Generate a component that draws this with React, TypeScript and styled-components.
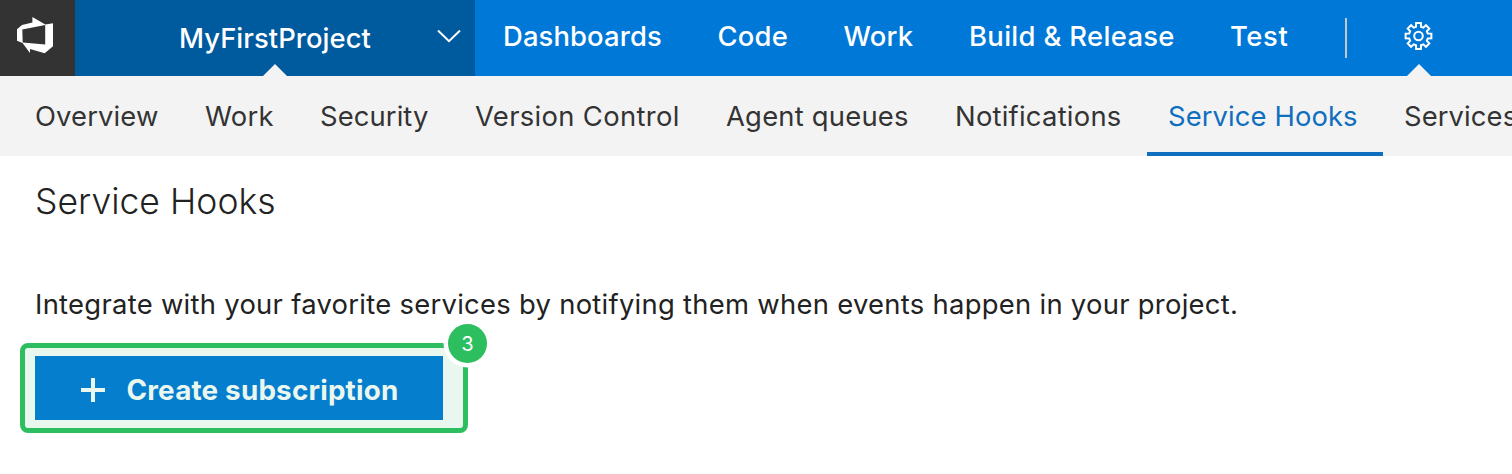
import React from "react";
import styled, { createGlobalStyle } from "styled-components";

const Global = createGlobalStyle`
  * { box-sizing: border-box; }
  html, body { margin: 0; padding: 0; background: #fff; overflow: hidden; }
  body { font-family: Inter, "Liberation Sans", sans-serif; color: #222; }
`;

const Page = styled.div`
  width: 1512px;
  height: 474px;
  overflow: hidden;
  background: #fff;
`;

const TopBar = styled.header`
  display: flex;
  height: 76px;
  background: #0078d7;
  color: #fff;
`;

const LogoCell = styled.div`
  width: 75px;
  flex: none;
  background: #333;
  svg { display: block; }
`;

const ProjectPicker = styled.div`
  position: relative;
  display: flex;
  align-items: center;
  justify-content: space-between;
  width: 400px;
  flex: none;
  padding: 0 13px 0 104px;
  background: #005a9e;
  svg { margin-bottom: 2px; }
`;

const Label = styled.span<{ $spacing: number }>`
  font-size: 27.4px;
  line-height: 40px;
  letter-spacing: ${(p) => p.$spacing}px;
  white-space: nowrap;
`;

const ProjectName = styled(Label)`
  font-weight: 500;
`;

const Hubs = styled.nav`
  display: flex;
  align-items: center;
  padding: 0 0 4px 28px;
`;

const Hub = styled.a<{ $width: number }>`
  flex: none;
  width: ${(p) => p.$width}px;
  font-weight: 500;
`;

const Divider = styled.i`
  flex: none;
  width: 2px;
  height: 40px;
  margin-top: 18px;
  background: #c8c8c8;
`;

const Settings = styled.div`
  position: relative;
  flex: none;
  width: 144px;
  svg { display: block; }
`;

const Notch = styled.span<{ $left: number }>`
  position: absolute;
  left: ${(p) => p.$left}px;
  bottom: 0;
  width: 24px;
  height: 12px;
  background: #f3f3f3;
  clip-path: polygon(50% 0, 100% 100%, 0 100%);
`;

const Tabs = styled.nav`
  display: flex;
  height: 80px;
  padding-left: 14px;
  background: #f3f3f3;
`;

const Tab = styled.a<{ $width: number; $active: boolean }>`
  flex: none;
  width: ${(p) => p.$width}px;
  padding: 20px 0 0 21px;
  border-bottom: 4px solid ${(p) => (p.$active ? "#106ebe" : "transparent")};
  color: ${(p) => (p.$active ? "#106ebe" : "#333")};
`;

const Content = styled.main`
  padding: 21px 0 0 35px;
`;

const Title = styled.h1`
  margin: 0;
  font-size: 35.5px;
  font-weight: 300;
  line-height: 50px;
  letter-spacing: 0.03px;
`;

const Intro = styled.p`
  margin: 57px 0 0;
  font-size: 27.4px;
  line-height: 40px;
  letter-spacing: 0.285px;
  white-space: nowrap;
`;

const Highlight = styled.div`
  position: relative;
  width: 448px;
  height: 90px;
  margin: 19px 0 0 -15px;
  padding: 8px 10px;
  border: 5px solid #2dbe60;
  border-radius: 8px;
  background: #eaf7ef;
`;

const CreateButton = styled.button`
  display: flex;
  align-items: center;
  width: 408px;
  height: 64px;
  padding: 4px 0 0 46px;
  border: 0;
  background: #057ecd;
  color: #eaf7ef;
  font: 700 27.8px/40px Inter, sans-serif;
  letter-spacing: 0.2px;
  white-space: nowrap;
  svg { flex: none; margin: 0 21.5px 0 0; }
`;

const Step = styled.span`
  position: absolute;
  top: -24.5px;
  right: -24px;
  width: 39px;
  height: 39px;
  border-radius: 50%;
  background: #2dbe60;
  box-shadow: 0 0 0 4.5px #fff;
  color: #fff;
  font-size: 20px;
  line-height: 40px;
  text-align: center;
`;

const hubs = [
  { name: "Dashboards", width: 214.5, spacing: 0.12 },
  { name: "Code", width: 126, spacing: 0.2 },
  { name: "Work", width: 125.5, spacing: 0.2 },
  { name: "Build & Release", width: 261, spacing: 0.33 },
  { name: "Test", width: 115, spacing: 0.6 },
];

const tabs = [
  { name: "Overview", width: 170, spacing: 0.13 },
  { name: "Work", width: 115, spacing: 0.25 },
  { name: "Security", width: 155, spacing: 0.1 },
  { name: "Version Control", width: 251, spacing: 0.33 },
  { name: "Agent queues", width: 229, spacing: 0.22 },
  { name: "Notifications", width: 213, spacing: 0.24 },
  { name: "Service Hooks", width: 236, spacing: 0.1 },
  { name: "Services", width: 150, spacing: 0.1 },
];

const TEETH = 8;
const polar = (r: number, deg: number) => {
  const a = (deg * Math.PI) / 180;
  return `${(71.5 + r * Math.cos(a)).toFixed(2)} ${(36 + r * Math.sin(a)).toFixed(2)}`;
};
const gearPath =
  "M" +
  Array.from({ length: TEETH }, (_, i) => {
    const c = i * 45 - 90;
    return [polar(9.6, c - 15), polar(13.1, c - 10.5), polar(13.1, c + 10.5), polar(9.6, c + 15)].join("L");
  }).join("L") +
  "Z";

export default function App() {
  return (
    <Page>
      <Global />
      <TopBar>
        <LogoCell>
          <svg width="75" height="76" viewBox="0 0 75 76">
            <path
              fill="#fff"
              fillRule="evenodd"
              d="M17 29.3L22 25L32.4 22.5V17L45.3 24.4L53 23.3V46.3L44.7 53.2L30 49V53L22.5 43L17 40.8ZM22.3 29.6L22.7 42.6L45.2 44.6V25Z"
            />
          </svg>
        </LogoCell>
        <ProjectPicker>
          <ProjectName $spacing={0.06}>MyFirstProject</ProjectName>
          <svg width="25" height="14" viewBox="0 0 25 14" fill="none" stroke="#fff" strokeWidth="2">
            <path d="M1 0.5L12 11.2L23 0.5" />
          </svg>
          <Notch $left={188} />
        </ProjectPicker>
        <Hubs>
          {hubs.map((h) => (
            <Hub key={h.name} $width={h.width}>
              <Label $spacing={h.spacing}>{h.name}</Label>
            </Hub>
          ))}
        </Hubs>
        <Divider />
        <Settings>
          <svg width="144" height="60" viewBox="0 0 144 60" fill="none" stroke="#fff" strokeWidth="2">
            <path d={gearPath} />
            <circle cx="71.5" cy="36" r="4.3" />
          </svg>
          <Notch $left={60} />
        </Settings>
      </TopBar>
      <Tabs>
        {tabs.map((t) => (
          <Tab key={t.name} $width={t.width} $active={t.name === "Service Hooks"}>
            <Label $spacing={t.spacing}>{t.name}</Label>
          </Tab>
        ))}
      </Tabs>
      <Content>
        <Title>Service Hooks</Title>
        <Intro>Integrate with your favorite services by notifying them when events happen in your project.</Intro>
        <Highlight>
          <CreateButton>
            <svg width="24" height="24" viewBox="0 0 24 24" stroke="#eaf7ef" strokeWidth="4">
              <path d="M12 0V24M0 12H24" />
            </svg>
            Create subscription
          </CreateButton>
          <Step>3</Step>
        </Highlight>
      </Content>
    </Page>
  );
}
